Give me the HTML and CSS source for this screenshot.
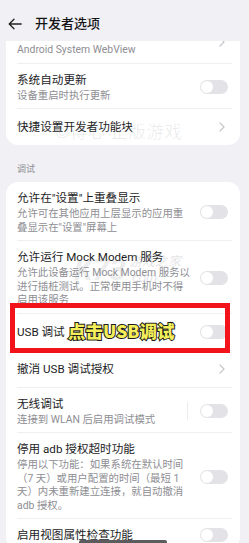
FILE: index.html
```html
<!DOCTYPE html>
<html lang="zh-CN">
<head>
<meta charset="utf-8">
<title>开发者选项</title>
<link rel="stylesheet" href="styles.css">
</head>
<body>
<div class="screen">
  <header class="header">
    <svg class="back" width="14" height="12" viewBox="0 0 14 12"><path d="M13.2 6H1.2M6 1.2L1.2 6L6 10.8" fill="none" stroke="#222" stroke-width="1.3" stroke-linecap="round" stroke-linejoin="round"/></svg>
    <h1 class="title">开发者选项</h1>
  </header>
  <div class="viewport">
    <div class="list">
      <section class="card card-first">
        <div class="row row-first">
          <div class="text"><div class="desc">Android System WebView</div></div>
          <svg class="chev chev-top" width="6" height="10" viewBox="0 0 6 10"><path d="M1 1l4 4-4 4" fill="none" stroke="#c8c8cc" stroke-width="1.2" stroke-linecap="round" stroke-linejoin="round"/></svg>
        </div>
        <div class="row">
          <div class="text"><div class="name">系统自动更新</div><div class="desc">设备重启时执行更新</div></div>
          <span class="toggle"></span>
        </div>
        <div class="row single">
          <div class="text"><div class="name">快捷设置开发者功能块</div></div>
          <svg class="chev" width="6" height="10" viewBox="0 0 6 10"><path d="M1 1l4 4-4 4" fill="none" stroke="#c8c8cc" stroke-width="1.2" stroke-linecap="round" stroke-linejoin="round"/></svg>
        </div>
      </section>

      <div class="section-label">调试</div>

      <section class="card">
        <div class="row">
          <div class="text"><div class="name">允许在"设置"上重叠显示</div><div class="desc">允许可在其他应用上层显示的应用重叠显示在"设置"屏幕上</div></div>
          <span class="toggle"></span>
        </div>
        <div class="row">
          <div class="text"><div class="name">允许运行 Mock Modem 服务</div><div class="desc">允许此设备运行 Mock Modem 服务以<br>进行插桩测试。正常使用手机时不得<br>启用该服务</div></div>
          <span class="toggle"></span>
        </div>
        <div class="row single">
          <div class="text"><div class="name">USB 调试</div></div>
          <span class="toggle"></span>
        </div>
        <div class="row single">
          <div class="text"><div class="name">撤消 USB 调试授权</div></div>
          <svg class="chev" width="6" height="10" viewBox="0 0 6 10"><path d="M1 1l4 4-4 4" fill="none" stroke="#c8c8cc" stroke-width="1.2" stroke-linecap="round" stroke-linejoin="round"/></svg>
        </div>
        <div class="row">
          <div class="text"><div class="name">无线调试</div><div class="desc">连接到 WLAN 后启用调试模式</div></div>
          <span class="vsep"></span>
          <span class="toggle toggle-after-sep"></span>
        </div>
        <div class="row">
          <div class="text"><div class="name">停用 adb 授权超时功能</div><div class="desc">停用以下功能：如果系统在默认时间<br>（7 天）或用户配置的时间（最短 1<br>天）内未重新建立连接，就自动撤消<br>adb 授权。</div></div>
          <span class="toggle"></span>
        </div>
        <div class="row">
          <div class="text"><div class="name">启用视图属性检查功能</div></div>
          <span class="toggle"></span>
        </div>
      </section>
    </div>
  </div>

  <div class="watermark wm-text">©得心 正版游戏</div>
  <div class="watermark wm-logo"><span class="wm-k73">K73</span><span class="wm-side"><span>游戏之家</span><span>.com</span></span></div>

  <div class="highlight"></div>
  <div class="callout">点击USB调试</div>
  <div class="home-bar"></div>
</div>
</body>
</html>
```

FILE: styles.css
```css
* { box-sizing: border-box; }

html, body {
  margin: 0;
  padding: 0;
  background: #f0f0f5;
}

body {
  font-family: Roboto, "Noto Sans CJK SC", "Noto Sans", sans-serif;
  color: #1c1c1e;
}

.screen {
  position: relative;
  width: 249px;
  height: 543px;
  overflow: hidden;
  background: #f0f0f5;
}

.header {
  height: 41px;
  display: flex;
  align-items: center;
  padding: 6px 0 0 8px;
}

.back {
  display: block;
  flex: none;
}

.title {
  margin: 0 0 0 13px;
  font-size: 13px;
  line-height: 16px;
  font-weight: 500;
  color: #151515;
}

.viewport {
  height: 502px;
  overflow: hidden;
}

.card {
  margin: 0 9px 0 6px;
  background: #ffffff;
  border-radius: 12px;
}

.card-first {
  border-radius: 0 0 12px 12px;
}

.row {
  display: flex;
  align-items: center;
  margin: 0 8px 0 11px;
  padding: 8px 4px 6px 0;
}

.row + .row {
  border-top: 1px solid #efeff1;
}

.row.single {
  padding-top: 10px;
  padding-bottom: 10px;
}

.row.row-first {
  padding-top: 2px;
  align-items: flex-start;
}

.text {
  flex: 1;
  min-width: 0;
}

.name {
  font-size: 11.6px;
  line-height: 16px;
  color: #1c1c1e;
}

.desc {
  font-size: 10.4px;
  line-height: 13.5px;
  color: #8e8e93;
}

.name + .desc {
  margin-top: 1px;
}

.toggle {
  position: relative;
  flex: none;
  width: 28px;
  height: 14px;
  margin-left: 8px;
  border-radius: 7px;
  background: #e3e3e7;
}

.toggle::after {
  content: "";
  position: absolute;
  left: 1px;
  top: 1px;
  width: 12px;
  height: 12px;
  border-radius: 50%;
  background: #ffffff;
}

.vsep {
  flex: none;
  width: 1px;
  height: 18px;
  margin-left: 6px;
  background: #ececef;
}

.toggle-after-sep {
  margin-left: 12px;
}

.chev {
  flex: none;
  display: block;
  margin: 0 3px 0 13px;
}

.chev-top {
  margin-top: -6px;
}

.section-label {
  margin: 18px 0 7px 17px;
  font-size: 9px;
  line-height: 12px;
  color: #8e8e93;
}

.watermark {
  position: absolute;
  color: rgba(150, 150, 160, 0.22);
  pointer-events: none;
}

.wm-text {
  left: 55px;
  top: 121px;
  font-size: 17px;
  line-height: 20px;
  letter-spacing: 1px;
  font-family: "Noto Sans CJK SC", sans-serif;
  font-weight: 300;
}

.wm-logo {
  left: 74px;
  top: 250px;
  display: flex;
  align-items: center;
  gap: 3px;
}

.wm-k73 {
  font-size: 30px;
  line-height: 40px;
  font-weight: 700;
  font-style: italic;
  color: rgba(140, 140, 150, 0.18);
}

.wm-side {
  display: flex;
  flex-direction: column;
  font-size: 13px;
  line-height: 16px;
  font-style: italic;
  color: rgba(140, 140, 150, 0.25);
}

.highlight {
  position: absolute;
  left: 10px;
  top: 303px;
  width: 220px;
  height: 50px;
  border: 5px solid #f2131b;
}

.callout {
  position: absolute;
  left: 68px;
  top: 320px;
  font-family: "Noto Sans CJK SC", sans-serif;
  font-size: 17.5px;
  line-height: 22px;
  font-weight: 900;
  color: #f3ee5a;
  -webkit-text-stroke: 2px #1a1a1a;
  paint-order: stroke fill;
}

.home-bar {
  position: absolute;
  left: 79px;
  top: 540px;
  width: 88px;
  height: 6px;
  background: #5c5c5f;
  border-radius: 2px 2px 0 0;
}
```
